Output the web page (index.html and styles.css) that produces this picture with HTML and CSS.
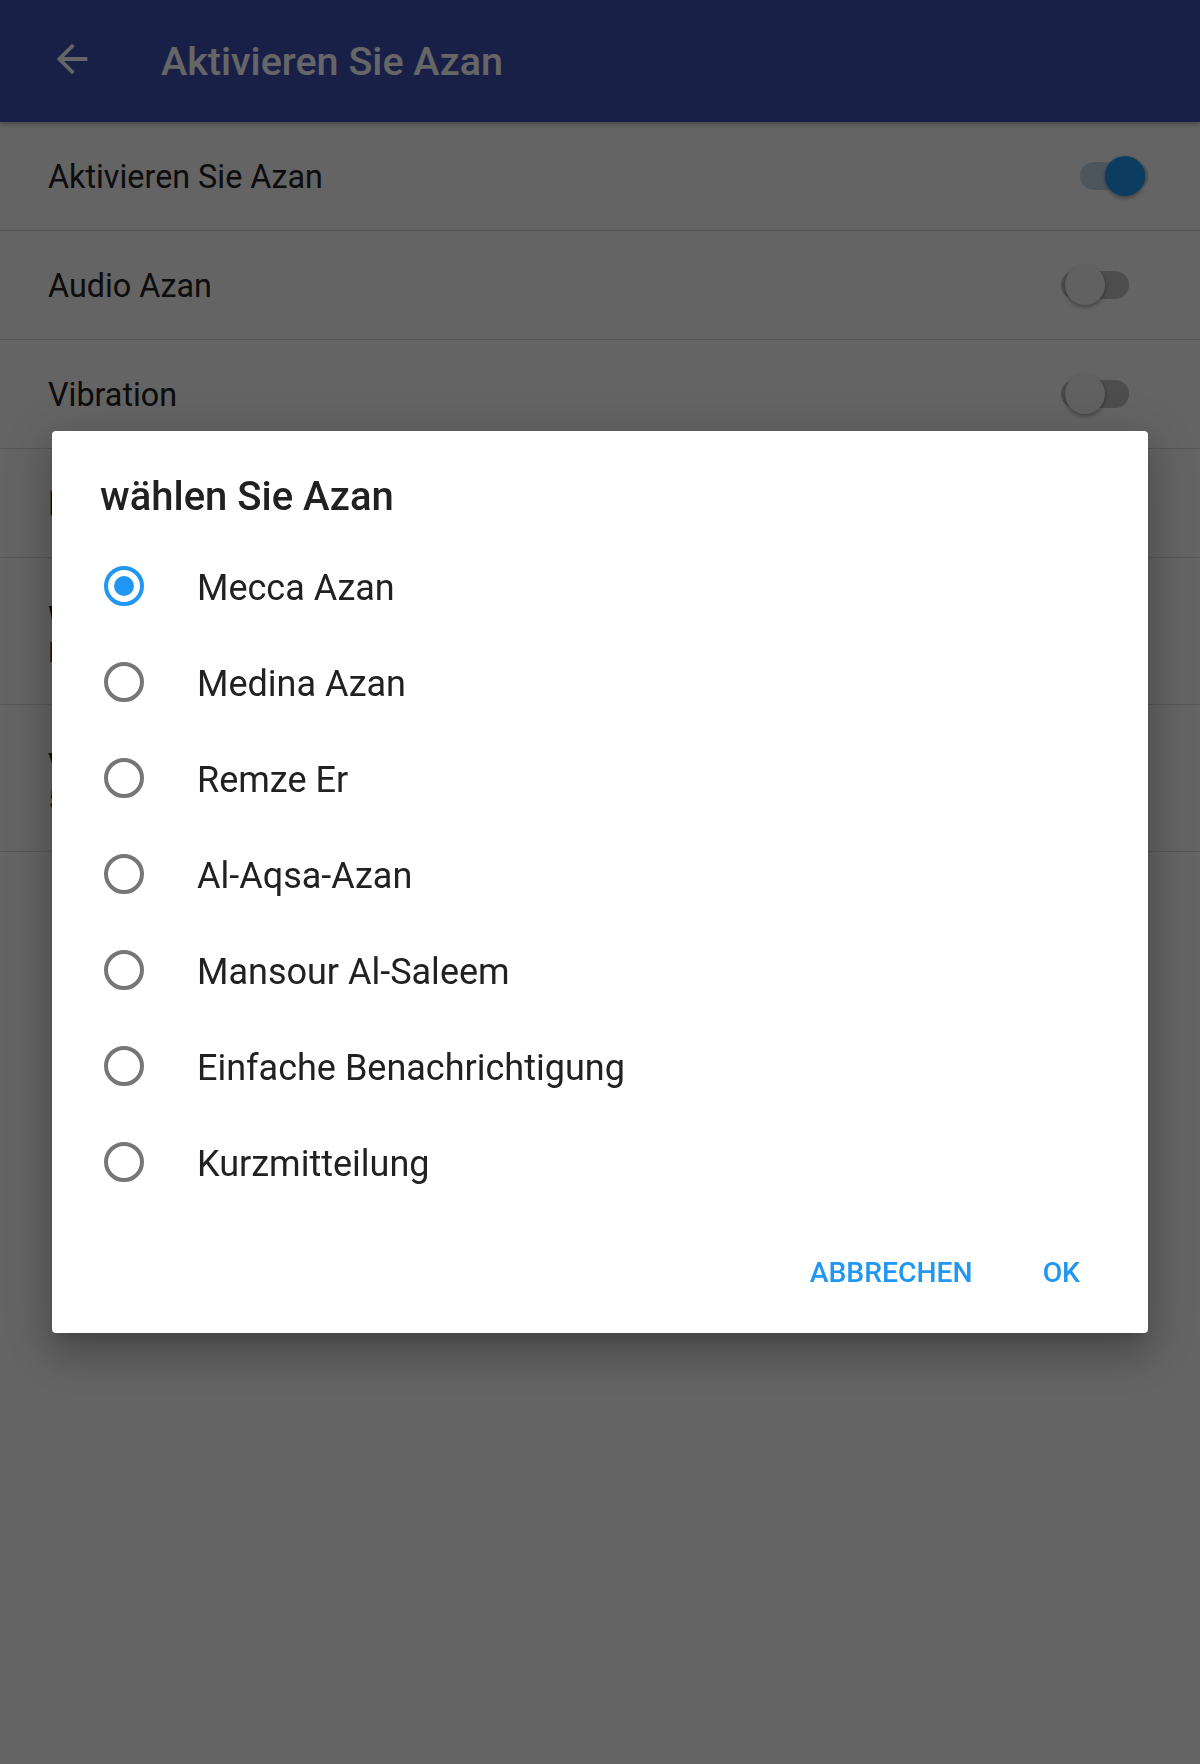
FILE: index.html
```html
<!DOCTYPE html>
<html lang="de">
<head>
  <meta charset="UTF-8" />
  <meta name="viewport" content="width=device-width, initial-scale=1.0" />
  <title>Aktivieren Sie Azan</title>
  <link rel="stylesheet" href="styles.css">
</head>
<body>
  <!-- Toolbar -->
  <header class="toolbar">
    <svg class="back" viewBox="0 0 24 24" width="46" height="46">
      <path d="M20 11H7.83l5.59-5.59L12 4l-8 8 8 8 1.41-1.41L7.83 13H20v-2z" fill="#fff"/>
    </svg>
    <h1>Aktivieren Sie Azan</h1>
  </header>

  <!-- Settings list -->
  <ul class="settings">
    <li class="row">
      <span class="label">Aktivieren Sie Azan</span>
      <div class="switch on"><span class="track"></span><span class="thumb"></span></div>
    </li>
    <li class="row">
      <span class="label">Audio Azan</span>
      <div class="switch"><span class="track"></span><span class="thumb"></span></div>
    </li>
    <li class="row">
      <span class="label">Vibration</span>
      <div class="switch"><span class="track"></span><span class="thumb"></span></div>
    </li>
    <li class="row">
      <span class="label">Lautstärke</span>
    </li>
    <li class="row tall">
      <div class="text">
        <span class="label">Wählen Sie Azan</span>
        <span class="sub">Mecca Azan</span>
      </div>
    </li>
    <li class="row tall">
      <div class="text">
        <span class="label">Vorabbenachrichtigung</span>
        <span class="sub">5 Minuten vor dem Gebet</span>
      </div>
    </li>
  </ul>

  <!-- Dialog -->
  <div class="scrim"></div>
  <div class="dialog">
    <h2>wählen Sie Azan</h2>
    <div class="options">
      <label class="option"><span class="radio checked"></span><span>Mecca Azan</span></label>
      <label class="option"><span class="radio"></span><span>Medina Azan</span></label>
      <label class="option"><span class="radio"></span><span>Remze Er</span></label>
      <label class="option"><span class="radio"></span><span>Al-Aqsa-Azan</span></label>
      <label class="option"><span class="radio"></span><span>Mansour Al-Saleem</span></label>
      <label class="option"><span class="radio"></span><span>Einfache Benachrichtigung</span></label>
      <label class="option"><span class="radio"></span><span>Kurzmitteilung</span></label>
    </div>
    <div class="actions">
      <button class="action">ABBRECHEN</button>
      <button class="action">OK</button>
    </div>
  </div>
</body>
</html>
```

FILE: styles.css
```css
/* Base */
body {
  margin: 0;
  min-height: 1764px;
  background: #fafafa;
  font-family: Roboto, 'Noto Sans', sans-serif;
  color: #212121;
}

/* Toolbar */
.toolbar {
  height: 122px;
  background: #3f51b5;
  display: flex;
  align-items: center;
  box-shadow: 0 2px 5px rgba(0, 0, 0, 0.3);
  position: relative;
}
.back {
  margin-left: 49px;
  margin-top: -4px;
}
.toolbar h1 {
  margin: 0 0 0 66px;
  font-size: 39.5px;
  font-weight: 500;
  color: #fff;
}

/* Settings list */
.settings {
  list-style: none;
  margin: 0;
  padding: 0;
}
.row {
  height: 108px;
  display: flex;
  align-items: center;
  justify-content: space-between;
  padding: 0 52px 0 48px;
  border-bottom: 1px solid #d8d8d8;
}
.row.tall {
  height: 146px;
}
.label {
  font-size: 32.3px;
  line-height: 40px;
  padding-top: 2px;
}
.text {
  display: flex;
  flex-direction: column;
  padding-top: 4px;
}
.text .label {
  padding-top: 0;
}
.sub {
  font-size: 28px;
  line-height: 28px;
  color: #424242;
}

/* Switches */
.switch {
  position: relative;
  width: 68px;
  height: 40px;
  margin-right: 19px;
}
.switch .track {
  position: absolute;
  left: 0;
  right: 0;
  top: 6px;
  height: 28px;
  border-radius: 14px;
  background: #c0c0c0;
}
.switch .thumb {
  position: absolute;
  top: 0;
  left: 4px;
  width: 40px;
  height: 40px;
  border-radius: 50%;
  background: #f2f2f2;
  box-shadow: 0 2px 4px rgba(0, 0, 0, 0.35);
}
.switch.on {
  margin-right: 0;
}
.switch.on .track {
  background: #c3d6e9;
}
.switch.on .thumb {
  left: 25px;
  background: #2196f3;
}

/* Scrim + dialog */
.scrim {
  position: fixed;
  inset: 0;
  background: rgba(0, 0, 0, 0.6);
}
.dialog {
  position: absolute;
  top: 431px;
  left: 52px;
  width: 1096px;
  height: 902px;
  box-sizing: border-box;
  background: #fff;
  border-radius: 4px;
  padding: 42px 0 0 48px;
  box-shadow: 0 11px 15px -7px rgba(0, 0, 0, 0.2),
              0 24px 38px 3px rgba(0, 0, 0, 0.14),
              0 9px 46px 8px rgba(0, 0, 0, 0.12);
}
.dialog h2 {
  margin: 0 0 17px;
  font-size: 40px;
  line-height: 48px;
  font-weight: 500;
  color: #212121;
}
.option {
  height: 96px;
  display: flex;
  align-items: center;
  font-size: 36px;
  color: #212121;
}
.option span:last-child {
  padding-top: 3px;
}
.radio {
  width: 40px;
  height: 40px;
  box-sizing: border-box;
  border: 4px solid #767676;
  border-radius: 50%;
  margin: 0 53px 0 4px;
  display: flex;
  align-items: center;
  justify-content: center;
}
.radio.checked {
  border-color: #2196f3;
}
.radio.checked::after {
  content: '';
  width: 20px;
  height: 20px;
  border-radius: 50%;
  background: #2196f3;
}
.actions {
  display: flex;
  justify-content: flex-end;
  gap: 38px;
  margin-top: 30px;
  padding-right: 52px;
}
.action {
  height: 64px;
  padding: 0 16px;
  border: none;
  background: none;
  font-family: inherit;
  font-size: 28.3px;
  font-weight: 500;
  color: #2196f3;
}
```
